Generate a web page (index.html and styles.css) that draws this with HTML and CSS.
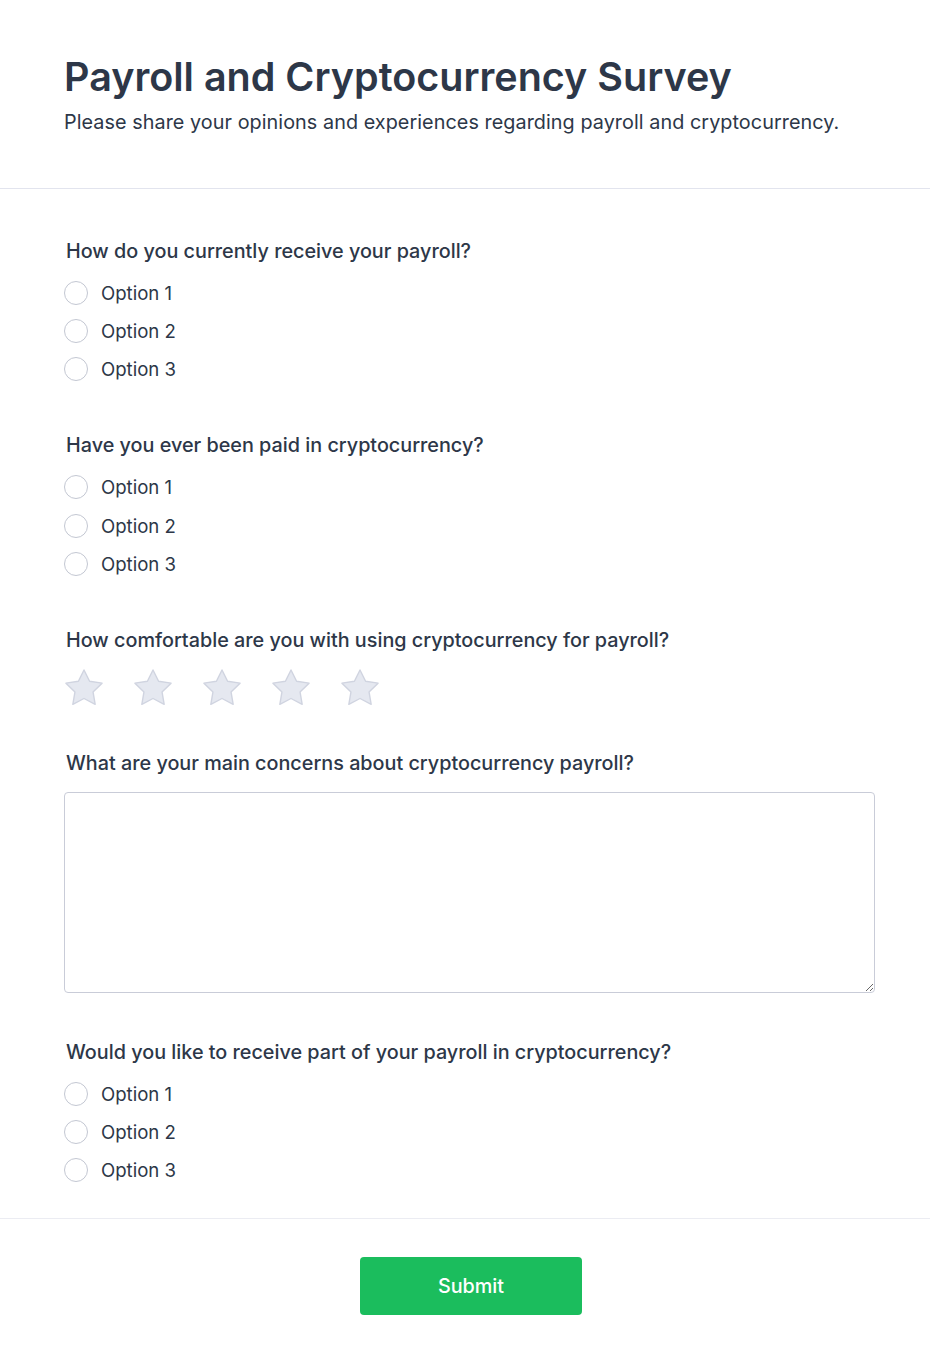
FILE: index.html
```html
<!DOCTYPE html>
<html lang="en">
<head>
<meta charset="utf-8">
<title>Payroll and Cryptocurrency Survey</title>
<link rel="stylesheet" href="styles.css">
</head>
<body>
<header class="header">
  <h1 class="title">Payroll and Cryptocurrency Survey</h1>
  <p class="subtitle">Please share your opinions and experiences regarding payroll and cryptocurrency.</p>
</header>
<form class="form">
  <div class="questions">
    <fieldset class="q">
      <legend class="q-label">How do you currently receive your payroll?</legend>
      <div class="options">
        <label class="opt"><span class="radio"></span>Option 1</label>
        <label class="opt"><span class="radio"></span>Option 2</label>
        <label class="opt"><span class="radio"></span>Option 3</label>
      </div>
    </fieldset>
    <fieldset class="q">
      <legend class="q-label">Have you ever been paid in cryptocurrency?</legend>
      <div class="options">
        <label class="opt"><span class="radio"></span>Option 1</label>
        <label class="opt"><span class="radio"></span>Option 2</label>
        <label class="opt"><span class="radio"></span>Option 3</label>
      </div>
    </fieldset>
    <fieldset class="q q-rating">
      <legend class="q-label">How comfortable are you with using cryptocurrency for payroll?</legend>
      <div class="stars">
        <svg class="star" viewBox="0 0 40 40"><path d="M20 2L25.58 13.31L38.07 15.13L29.03 23.94L31.17 36.37L20 30.5L8.83 36.37L10.97 23.94L1.93 15.13L14.42 13.31Z"/></svg>
        <svg class="star" viewBox="0 0 40 40"><path d="M20 2L25.58 13.31L38.07 15.13L29.03 23.94L31.17 36.37L20 30.5L8.83 36.37L10.97 23.94L1.93 15.13L14.42 13.31Z"/></svg>
        <svg class="star" viewBox="0 0 40 40"><path d="M20 2L25.58 13.31L38.07 15.13L29.03 23.94L31.17 36.37L20 30.5L8.83 36.37L10.97 23.94L1.93 15.13L14.42 13.31Z"/></svg>
        <svg class="star" viewBox="0 0 40 40"><path d="M20 2L25.58 13.31L38.07 15.13L29.03 23.94L31.17 36.37L20 30.5L8.83 36.37L10.97 23.94L1.93 15.13L14.42 13.31Z"/></svg>
        <svg class="star" viewBox="0 0 40 40"><path d="M20 2L25.58 13.31L38.07 15.13L29.03 23.94L31.17 36.37L20 30.5L8.83 36.37L10.97 23.94L1.93 15.13L14.42 13.31Z"/></svg>
      </div>
    </fieldset>
    <fieldset class="q q-text">
      <legend class="q-label">What are your main concerns about cryptocurrency payroll?</legend>
      <textarea class="textarea"></textarea>
    </fieldset>
    <fieldset class="q">
      <legend class="q-label">Would you like to receive part of your payroll in cryptocurrency?</legend>
      <div class="options">
        <label class="opt"><span class="radio"></span>Option 1</label>
        <label class="opt"><span class="radio"></span>Option 2</label>
        <label class="opt"><span class="radio"></span>Option 3</label>
      </div>
    </fieldset>
  </div>
  <div class="footer">
    <button type="button" class="submit">Submit</button>
  </div>
</form>
</body>
</html>
```
FILE: styles.css
```css
* { box-sizing: border-box; }
body {
  margin: 0;
  font-family: Inter, "Noto Sans", sans-serif;
  color: #2d3748;
  background: #fff;
}
.header {
  padding: 55px 64px 52px;
  border-bottom: 1px solid #e2e4ee;
}
.title {
  margin: 0;
  font-size: 39.5px;
  line-height: 44px;
  font-weight: 600;
  color: #2d3748;
}
.subtitle {
  margin: 9px 0 0;
  font-size: 19.8px;
  line-height: 28px;
  letter-spacing: 0.06px;
  color: #2d3748;
}
.questions {
  padding: 48px 55px 34px 64px;
  border-bottom: 1px solid #ebecf2;
  display: flex;
  flex-direction: column;
  gap: 48px;
}
.q {
  margin: 0;
  padding: 0;
  border: 0;
  min-width: 0;
}
.q-label {
  padding: 0 0 0 2px;
  font-size: 19.8px;
  line-height: 28px;
  font-weight: 500;
  color: #2d3748;
}
.options {
  margin-top: 14px;
  display: flex;
  flex-direction: column;
  gap: 10.2px;
}
.opt {
  display: flex;
  align-items: center;
  gap: 13px;
  font-size: 18.6px;
  line-height: 28px;
  color: #2d3748;
}
.radio {
  width: 24px;
  height: 24px;
  border-radius: 50%;
  border: 1.5px solid #c3c7d2;
  background: #fff;
  flex: none;
}
.stars {
  margin-top: 14px;
  display: flex;
  gap: 29px;
  height: 40px;
  margin-bottom: -7px;
}
.star {
  width: 40px;
  height: 40px;
}
.star path {
  fill: #e5e8f0;
  stroke: #d0d4e0;
  stroke-width: 1.4;
  stroke-linejoin: round;
}
.textarea {
  display: block;
  margin-top: 15px;
  width: 811px;
  height: 201px;
  border: 1px solid #c9ccd8;
  border-radius: 4px;
  resize: vertical;
  font-family: inherit;
}
.q-text + .q { margin-top: -3px; }
.footer {
  padding: 38px 0 40px 64px;
  width: 878px;
  display: flex;
  justify-content: center;
}
.submit {
  width: 222px;
  height: 58px;
  border: 0;
  border-radius: 4px;
  background: #1bbd5d;
  color: #fff;
  font-family: inherit;
  font-size: 19.8px;
  font-weight: 500;
}
```
